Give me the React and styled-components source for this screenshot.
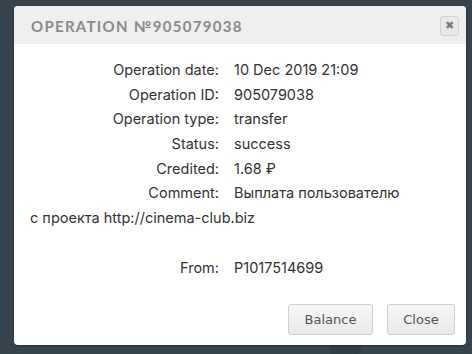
import React from "react";
import styled, { createGlobalStyle } from "styled-components";

const GlobalStyle = createGlobalStyle`
  html, body {
    margin: 0;
    padding: 0;
    background: #36454d;
  }
  body {
    width: 472px;
    height: 354px;
    overflow: hidden;
  }
`;

const Backdrop = styled.div`
  position: relative;
  width: 472px;
  height: 354px;
  background: #36454d;
  padding: 6px 6px 0 14px;
  box-sizing: border-box;
`;

const GhostCircle = styled.div`
  position: absolute;
  left: 329px;
  top: 330px;
  width: 32px;
  height: 32px;
  border-radius: 50%;
  background: #2f3d44;
`;

const Modal = styled.div`
  position: relative;
  width: 452px;
  height: 339px;
  background: #fff;
  border-radius: 4px;
  overflow: hidden;
  display: flex;
  flex-direction: column;
  box-shadow: 0 1px 2px rgba(0, 0, 0, 0.3);
`;

const Header = styled.div`
  height: 38px;
  background: #efefef;
  display: flex;
  align-items: center;
  justify-content: space-between;
  padding: 0 7px 0 17px;
`;

const Title = styled.h3`
  margin: 0;
  font-family: "Lato", sans-serif;
  font-weight: 700;
  font-size: 15px;
  letter-spacing: 1.3px;
  color: #8a8a8a;
  padding-top: 1px;
`;

const CloseIcon = styled.button`
  width: 19px;
  height: 20px;
  padding: 0;
  border: 1px solid #d2d2d2;
  border-radius: 3px;
  background: #e9e9e9;
  color: #7a7a7a;
  font-size: 11px;
  line-height: 18px;
  font-family: "DejaVu Sans", sans-serif;
  font-weight: 700;
  margin-top: 2px;
`;

const Body = styled.div`
  flex: 1;
  padding: 14px 16px 0 16px;
  font-family: "Inter", sans-serif;
  font-size: 14.5px;
  color: #333;
`;

const Row = styled.div`
  display: grid;
  grid-template-columns: 189px 1fr;
  column-gap: 15px;
  height: 24.7px;
  line-height: 24.7px;
  margin-top: ${({ $gap }) => $gap || 0}px;
`;

const Label = styled.span`
  text-align: right;
`;

const Value = styled.span`
  text-align: left;
`;

const Wrapped = styled.div`
  line-height: 24.7px;
  height: 24.7px;
`;

const Footer = styled.div`
  display: flex;
  justify-content: flex-end;
  gap: 14px;
  padding: 0 11px 10px 0;
`;

const Button = styled.button`
  width: ${({ $w }) => $w}px;
  height: 31px;
  padding: 0;
  border: 1px solid #cfcfcf;
  border-radius: 3px;
  background: linear-gradient(#f7f7f7, #e9e9e9);
  font-family: "DejaVu Sans", sans-serif;
  font-size: 13px;
  color: #555;
`;

const rows = [
  ["Operation date:", "10 Dec 2019 21:09"],
  ["Operation ID:", "905079038"],
  ["Operation type:", "transfer"],
  ["Status:", "success"],
  ["Credited:", "1.68 ₽"],
  ["Comment:", "Выплата пользователю"],
];

export default function App() {
  return (
    <>
      <GlobalStyle />
      <Backdrop>
        <GhostCircle />
        <Modal>
          <Header>
            <Title>OPERATION №905079038</Title>
            <CloseIcon>✖</CloseIcon>
          </Header>
          <Body>
            {rows.map(([l, v]) => (
              <Row key={l}>
                <Label>{l}</Label>
                <Value>{v}</Value>
              </Row>
            ))}
            <Wrapped>с проекта http://cinema-club.biz</Wrapped>
            <Row $gap={25}>
              <Label>From:</Label>
              <Value>P1017514699</Value>
            </Row>
          </Body>
          <Footer>
            <Button $w={85}>Balance</Button>
            <Button $w={68}>Close</Button>
          </Footer>
        </Modal>
      </Backdrop>
    </>
  );
}
